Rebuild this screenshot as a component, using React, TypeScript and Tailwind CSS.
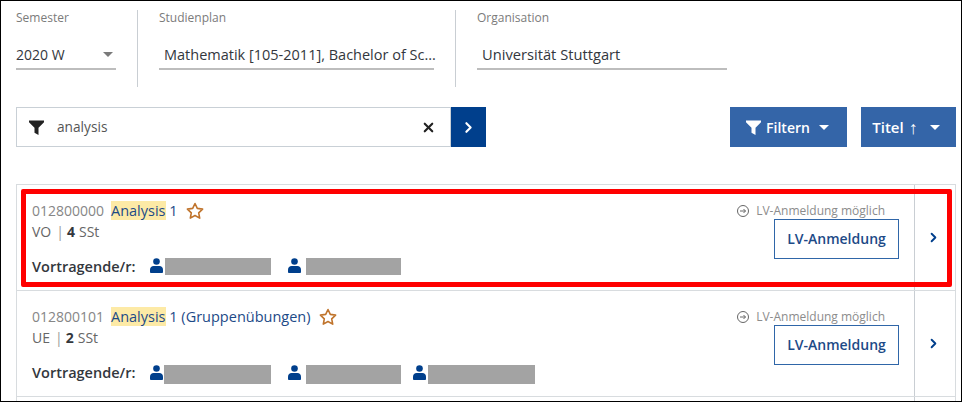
import { ChevronRight, X } from "lucide-react";

function FunnelIcon({ className }: { className: string }) {
  return (
    <svg viewBox="0 0 15 15" className={className} fill="currentColor" aria-hidden="true">
      <path d="M0 .5h15v1.700L9.500 7.800V15L5.500 12.800V7.800L0 2.200z" />
    </svg>
  );
}

function Caret({ className }: { className: string }) {
  return <span className={`h-0 w-0 border-x-[5px] border-t-[5px] border-x-transparent ${className}`} />;
}

function PersonIcon() {
  return (
    <svg viewBox="0 0 13 15" className="h-[15px] w-[13px] shrink-0 text-[#003f8c]" fill="currentColor" aria-hidden="true">
      <circle cx="6.500" cy="3.500" r="3.300" />
      <path d="M0 14v-2.500C0 9.500 1.700 8 3.500 8h6c1.800 0 3.500 1.500 3.500 3.500V14c0 .5-.5 1-1 1H1c-.5 0-1-.5-1-1z" />
    </svg>
  );
}

function StarIcon() {
  return (
    <svg viewBox="0 0 18 18" className="h-[18px] w-[18px] text-[#c0742c]" fill="none" stroke="currentColor" strokeWidth="1.600" strokeLinejoin="round" aria-hidden="true">
      <path d="M9 1.500l2.300 4.900 5.300.7-3.900 3.700 1 5.300L9 13.500l-4.700 2.600 1-5.300-3.900-3.700 5.300-.7z" />
    </svg>
  );
}

function Field({ label, value, width, textSize, caret }: { label: string; value: string; width: string; textSize: string; caret?: boolean }) {
  return (
    <div className={width}>
      <div className="text-[12px] leading-[16px] text-[#7b7b7b]">{label}</div>
      <div className={`mt-[17px] flex h-[27px] items-center justify-between whitespace-nowrap border-b-2 border-[#bdbdbd] pb-[2px] text-[#33373d] ${textSize} ${caret ? "" : "pl-[5px]"}`}>
        <span>{value}</span>
        {caret && <Caret className="mr-[3px] border-t-[#7a7a7a]" />}
      </div>
    </div>
  );
}

type Lecturer = {
  spacing: string;
  iconGap: string;
  block: string;
};

type Course = {
  code: string;
  title: string;
  type: string;
  hours: string;
  lecturerTop: string;
  lecturers: Lecturer[];
};

const courses: Course[] = [
  {
    code: "012800000",
    title: " 1",
    type: "VO",
    hours: "4",
    lecturerTop: "mt-[2px]",
    lecturers: [
      { spacing: "", iconGap: "gap-[2px]", block: "h-[17px] w-[106px]" },
      { spacing: "ml-[17px]", iconGap: "gap-[5px]", block: "h-[17px] w-[95px]" },
    ],
  },
  {
    code: "012800101",
    title: " 1 (Gruppenübungen)",
    type: "UE",
    hours: "2",
    lecturerTop: "mt-[3px]",
    lecturers: [
      { spacing: "", iconGap: "gap-[1px]", block: "h-[19px] w-[107px]" },
      { spacing: "ml-[17px]", iconGap: "gap-[5px]", block: "h-[19px] w-[95px]" },
      { spacing: "ml-[12px]", iconGap: "gap-[2px]", block: "h-[19px] w-[107px]" },
    ],
  },
];

function CourseRow({ course }: { course: Course }) {
  return (
    <div className="flex h-[106px] border-b border-[#d8dcdf]">
      <div className="flex min-w-0 flex-1 justify-between px-[15px] pt-[15px]">
        <div>
          <div className="flex h-[22px] items-center pb-[1px] text-[14px] text-[#868686]">
            <span className="w-[79px]">{course.code}</span>
            <span className="text-[14.500px] text-[#1d4a87]">
              <span className="bg-[#fdeaa6]">Analysis</span>
              {course.title}
            </span>
            <span className="ml-[8px]">
              <StarIcon />
            </span>
          </div>
          <div className="-mt-[1px] flex h-[21px] items-center text-[14px] text-[#666]">
            {course.type}
            <span className="ml-[5px] mr-[3px] text-[#999]">|</span>
            <b className="mr-[4px] font-bold text-[#33373d]">{course.hours}</b> SSt
          </div>
          <div className="mt-[14px] flex h-[20px] items-start text-[14.500px] font-semibold text-[#33373d]">
            <span className="w-[118px]">Vortragende/r:</span>
            {course.lecturers.map((l, i) => (
              <div key={i} className={`flex items-start ${course.lecturerTop} ${l.spacing} ${l.iconGap}`}>
                <PersonIcon />
                <div className={`bg-[#a3a3a3] ${l.block}`} />
              </div>
            ))}
          </div>
        </div>
        <div className="flex flex-col items-end">
          <div className="mr-[14px] flex h-[22px] items-center gap-[7px] text-[12px] text-[#8c8c8c]">
            <svg viewBox="0 0 12 12" className="h-[12px] w-[12px]" fill="none" stroke="#666" strokeWidth="1" aria-hidden="true">
              <circle cx="6" cy="6" r="5.500" />
              <path d="M3 6h5.500M6.500 4l2 2-2 2" />
            </svg>
            LV-Anmeldung möglich
          </div>
          <button type="button" className="-mt-[3px] flex h-[40px] w-[125px] items-center justify-center border border-[#2f66a8] pb-[1px] text-[14px] font-semibold text-[#1d4a87]">
            LV-Anmeldung
          </button>
        </div>
      </div>
      <div className="flex w-[41px] items-start justify-center border-l border-[#c9ced3] pr-[4px] pt-[45px] text-[#003f8c]">
        <ChevronRight size={15} strokeWidth={3} />
      </div>
    </div>
  );
}

export default function App() {
  return (
    <div className="relative h-[402px] w-[962px] overflow-hidden border border-black bg-white font-['Open_Sans',sans-serif]">
      <div className="flex pl-[15px] pr-[5px] pt-[9px]">
        <Field label="Semester" value="2020 W" width="w-[100px]" textSize="text-[14px]" caret />
        <div className="mx-[21px] h-[77px] w-px bg-[#c9ced3]" />
        <Field label="Studienplan" value="Mathematik [105-2011], Bachelor of Sc..." width="w-[275px]" textSize="text-[14.500px]" />
        <div className="mx-[21px] h-[77px] w-px bg-[#c9ced3]" />
        <Field label="Organisation" value="Universität Stuttgart" width="w-[250px]" textSize="text-[14.700px]" />
      </div>

      <div className="mt-[20px] flex items-stretch pl-[15px] pr-[5px]">
        <div className="flex h-[40px] w-[435px] items-center border border-[#c9d0d6] pl-[12px] pr-[14px]">
          <FunnelIcon className="h-[15px] w-[15px] text-[#222]" />
          <span className="ml-[13px] flex-1 text-[13.700px] text-[#555]">analysis</span>
          <X size={15} strokeWidth={3.400} className="text-[#222]" />
        </div>
        <button type="button" className="flex h-[40px] w-[35px] items-center justify-center bg-[#003f8c] text-white">
          <ChevronRight size={17} strokeWidth={3} />
        </button>
        <button type="button" className="ml-auto flex h-[40px] w-[117px] items-center justify-center gap-[5px] bg-[#3465a8] pr-[2px] text-[14px] font-semibold text-white">
          <FunnelIcon className="h-[15px] w-[15px]" />
          Filtern
          <Caret className="ml-[4px] border-t-white" />
        </button>
        <button type="button" className="ml-[14px] flex h-[40px] w-[95px] items-center justify-center gap-[12px] bg-[#3465a8] pr-[5px] text-[15px] font-semibold text-white">
          <span className="flex items-center gap-[5px] whitespace-nowrap">
            Titel <span className="text-[18px] font-normal leading-none">↑</span>
          </span>
          <Caret className="border-t-white" />
        </button>
      </div>

      <div className="ml-[15px] mr-[5px] mt-[37px] border-x border-t border-[#d8dcdf]">
        {courses.map((c) => (
          <CourseRow key={c.code} course={c} />
        ))}
        <div className="flex h-[10px]">
          <div className="flex-1" />
          <div className="w-[41px] border-l border-[#c9ced3]" />
        </div>
      </div>

      {/* highlight drawn over the first row */}
      <div className="absolute left-[20px] top-[188px] h-[98px] w-[931px] rounded-[2px] border-[5px] border-[#ff0000]" />
    </div>
  );
}
